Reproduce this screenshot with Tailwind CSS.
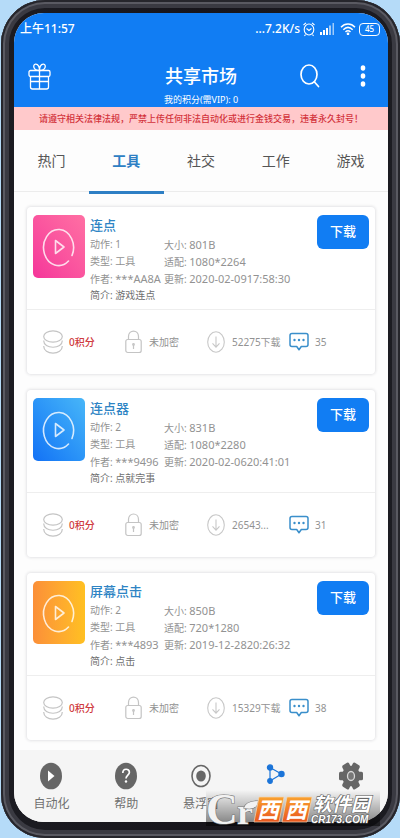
<!DOCTYPE html>
<html lang="zh-CN">
<head>
<meta charset="utf-8">
<meta name="viewport" content="width=device-width, initial-scale=1">
<title>共享市场</title>
<script src="https://cdn.jsdelivr.net/npm/@tailwindcss/browser@4"></script>
</head>
<body class="bg-[#b5dbf8] font-['Noto_Sans','Noto_Sans_CJK_SC',sans-serif] text-[#929292]">
<svg class="hidden" aria-hidden="true">
  <symbol id="play" viewBox="0 0 52 63" preserveAspectRatio="none" fill="none" stroke="#fff" stroke-opacity=".8" stroke-width="1.6" stroke-linecap="round">
    <path d="M35.500 46A15 18 0 1 1 39 40.500"/>
    <path d="M22.500 25.500v13l8.500-6.500z" stroke-linejoin="round"/>
  </symbol>
  <symbol id="coins" viewBox="0 0 20 24" fill="none" stroke="#c4c4c4" stroke-width="1.2">
    <ellipse cx="10" cy="6.500" rx="9.300" ry="5.700"/>
    <path d="M.8 10.500c-.8 9 19.200 9 18.400 0M.8 16c-.8 9.500 19.200 9.500 18.400 0"/>
  </symbol>
  <symbol id="lock" viewBox="0 0 17 24" fill="none" stroke="#c4c4c4" stroke-width="1.2">
    <rect x=".8" y="9.500" width="15.400" height="13" rx="2"/>
    <path d="M3.500 9.500V6.500c0-7.300 10-7.300 10 0v3M8.500 14.500v4.500"/>
    <circle cx="8.500" cy="14.500" r=".8"/>
  </symbol>
  <symbol id="down" viewBox="0 0 18 22" fill="none" stroke="#c8c8c8" stroke-width="1.100">
    <ellipse cx="9" cy="11" rx="8.300" ry="10.200"/>
    <path d="M9 5.500v10.500M5.500 12.300L9 16.200l3.500-3.900"/>
  </symbol>
  <symbol id="chat" viewBox="0 0 20 20">
    <path d="M3 1.500h14q2 0 2 2v9q0 2-2 2h-4.700L10 17.800 7.700 14.500H3q-2 0-2-2v-9q0-2 2-2z" fill="none" stroke="#3a8fcb" stroke-width="1.500" stroke-linejoin="round"/>
    <g fill="#3a8fcb"><circle cx="5.500" cy="8" r="1.200"/><circle cx="10" cy="8" r="1.200"/><circle cx="14.500" cy="8" r="1.200"/></g>
  </symbol>
</svg>

<div class="relative ml-px flex min-h-screen flex-col rounded-[44px] bg-linear-to-r from-[#1c1c22] via-[#17151b] to-[#1c1c22] pt-[13px] pr-3 pb-4 pl-[13px] shadow-[inset_0_0_0_2px_#26262c,inset_0_0_0_4px_#5a5a62,inset_0_0_0_8px_#3a3a42]">
  <div class="flex flex-1 flex-col overflow-hidden rounded-[30px] bg-[#fdfdfd]">

    <header class="bg-[#117df3] text-white">
      <div class="flex h-8 items-center justify-between pr-2 pl-[6px] text-[12px] font-medium">
        <span>上午11:57</span>
        <div class="flex items-center gap-[3px]">
          <span>...7.2K/s</span>
          <svg class="h-4 w-3" viewBox="0 0 12 16" fill="none" stroke="#fff" stroke-width="1.100"><ellipse cx="6" cy="8.500" rx="4.800" ry="5.500"/><path d="M3.500 7.500L6 9.500l2.500-2M.5 4L3 1.800M11.500 4L9 1.800M2.500 13.500L1.500 15M9.500 13.500l1 1.500"/></svg>
          <svg class="ml-px h-3 w-4" viewBox="0 0 16 12" fill="#fff"><path d="M1 9h2v3H1zM4 7h2v5H4zM7 5h2v7H7z"/><path d="M10 2.500h2V12h-2zM13.500 0h1.500v12h-1.500z" opacity=".6"/></svg>
          <svg class="ml-[2px] h-3 w-4" viewBox="0 0 16 12" fill="none" stroke="#fff" stroke-width="1.500"><path d="M1 4.200c4-4.300 10-4.300 14 0M3.300 6.700c3-3 6.400-3 9.400 0M5.500 9c1.600-1.500 3.400-1.500 5 0"/><circle cx="8" cy="10.800" r=".6" fill="#fff"/></svg>
          <span class="flex h-[13px] w-[21px] items-center justify-center rounded-[4px] border border-white text-[8px]">45</span>
        </div>
      </div>
      <div class="mt-[13px] grid h-9 grid-cols-[1fr_auto_1fr] items-center pr-[22px] pl-[14px]">
        <button class="w-6" aria-label="礼物"><svg class="h-[27px] w-[23px]" viewBox="0 0 23 27" fill="none" stroke="#fff" stroke-width="1.300"><rect x="1" y="7.500" width="21" height="6" rx="1.500"/><path d="M2.500 13.500V24q0 2 2 2h14q2 0 2-2V13.500M11.500 7.500V26M2.500 18.500h18"/><path d="M11.500 7.500C5 7.500 4.500 1.500 7.500 1.200c3-.2 4 3.300 4 6.300 0-3 1-6.500 4-6.300 3 .3 2.500 6.300-4 6.300z"/></svg></button>
        <h1 class="pl-2 text-[18px] leading-9 font-medium">共享市场</h1>
        <div class="flex items-center justify-end gap-10">
          <button aria-label="搜索"><svg class="h-6 w-5" viewBox="0 0 20 24" fill="none" stroke="#fff" stroke-width="1.700" stroke-linecap="round"><ellipse cx="9" cy="10.500" rx="8" ry="9.500"/><path d="M14.500 18l4 4.500"/></svg></button>
          <button aria-label="更多"><svg class="h-[22px] w-[6px]" viewBox="0 0 6 22" fill="#fff"><ellipse cx="3" cy="3" rx="2.300" ry="2.700"/><ellipse cx="3" cy="11" rx="2.300" ry="2.700"/><ellipse cx="3" cy="19" rx="2.300" ry="2.700"/></svg></button>
        </div>
      </div>
      <p class="h-[13px] text-center text-[9px] leading-[12px]">我的积分(需VIP): 0</p>
    </header>

    <p class="h-[23px] bg-[#ffc9cb] text-center text-[9px] leading-[23px] font-medium whitespace-nowrap text-[#d3333c]">请遵守相关法律法规，严禁上传任何非法自动化或进行金钱交易，违者永久封号！</p>

    <nav class="grid h-[62px] grid-cols-5 border-b border-[#ececec] text-center text-[14px] text-[#555]">
      <a href="#" class="leading-[61px]">热门</a>
      <a href="#" class="border-b-3 border-[#2e7fc4] leading-[61px] font-bold text-[#2e7fc4]">工具</a>
      <a href="#" class="leading-[61px]">社交</a>
      <a href="#" class="leading-[61px]">工作</a>
      <a href="#" class="leading-[61px]">游戏</a>
    </nav>

    <main class="flex flex-1 flex-col gap-4 px-[13px] pt-[15px] pb-[10px]">
      <article class="rounded-[4px] bg-white shadow-[0_0_3px_1px_#e4e4e6]">
        <div class="flex border-b border-[#eee] px-[6px] pt-2 pb-[5px]">
          <svg class="h-[63px] w-[52px] shrink-0 rounded-[5px] bg-linear-to-bl from-[#ff6fa3] to-[#f5349a]"><use href="#play"/></svg>
          <div class="flex-1 pl-[5px] text-[10px] leading-[17px] whitespace-nowrap">
            <h2 class="h-[21px] text-[13px] leading-[21px] font-medium text-[#2e84c4]">连点</h2>
            <div class="grid auto-rows-[17px] grid-cols-[74px_1fr]">
              <p>动作: 1</p><p>大小: <span class="text-[11px]">801B</span></p>
              <p>类型: 工具</p><p>适配: <span class="text-[11px]">1080*2264</span></p>
              <p>作者: <span class="text-[11px]">***AA8A</span></p><p>更新: <span class="text-[11px]">2020-02-0917:58:30</span></p>
            </div>
            <p class="text-[#6f6f6f]">简介: 游戏连点</p>
          </div>
          <button class="-ml-14 h-[34px] w-[52px] shrink-0 rounded-[6px] bg-[#117df3] text-[13px] font-medium text-white">下载</button>
        </div>
        <div class="grid h-16 grid-cols-4 items-center pr-1 pl-4 text-[10px] whitespace-nowrap">
          <span class="flex items-center gap-[6px] font-medium text-[#cf3a40]"><svg class="h-6 w-5"><use href="#coins"/></svg>0积分</span>
          <span class="flex items-center gap-[7px]"><svg class="h-6 w-[17px]"><use href="#lock"/></svg>未加密</span>
          <span class="flex items-center gap-[7px]"><svg class="h-[22px] w-[18px]"><use href="#down"/></svg>52275下载</span>
          <span class="flex items-center gap-[6px]"><svg class="size-5"><use href="#chat"/></svg>35</span>
        </div>
      </article>

      <article class="rounded-[4px] bg-white shadow-[0_0_3px_1px_#e4e4e6]">
        <div class="flex border-b border-[#eee] px-[6px] pt-2 pb-[5px]">
          <svg class="h-[63px] w-[52px] shrink-0 rounded-[5px] bg-linear-to-tr from-[#1471f5] to-[#48b6f8]"><use href="#play"/></svg>
          <div class="flex-1 pl-[5px] text-[10px] leading-[17px] whitespace-nowrap">
            <h2 class="h-[21px] text-[13px] leading-[21px] font-medium text-[#2e84c4]">连点器</h2>
            <div class="grid auto-rows-[17px] grid-cols-[74px_1fr]">
              <p>动作: 2</p><p>大小: <span class="text-[11px]">831B</span></p>
              <p>类型: 工具</p><p>适配: <span class="text-[11px]">1080*2280</span></p>
              <p>作者: <span class="text-[11px]">***9496</span></p><p>更新: <span class="text-[11px]">2020-02-0620:41:01</span></p>
            </div>
            <p class="text-[#6f6f6f]">简介: 点就完事</p>
          </div>
          <button class="-ml-14 h-[34px] w-[52px] shrink-0 rounded-[6px] bg-[#117df3] text-[13px] font-medium text-white">下载</button>
        </div>
        <div class="grid h-16 grid-cols-4 items-center pr-1 pl-4 text-[10px] whitespace-nowrap">
          <span class="flex items-center gap-[6px] font-medium text-[#cf3a40]"><svg class="h-6 w-5"><use href="#coins"/></svg>0积分</span>
          <span class="flex items-center gap-[7px]"><svg class="h-6 w-[17px]"><use href="#lock"/></svg>未加密</span>
          <span class="flex items-center gap-[7px]"><svg class="h-[22px] w-[18px]"><use href="#down"/></svg>26543...</span>
          <span class="flex items-center gap-[6px]"><svg class="size-5"><use href="#chat"/></svg>31</span>
        </div>
      </article>

      <article class="rounded-[4px] bg-white shadow-[0_0_3px_1px_#e4e4e6]">
        <div class="flex border-b border-[#eee] px-[6px] pt-2 pb-[5px]">
          <svg class="h-[63px] w-[52px] shrink-0 rounded-[5px] bg-linear-to-r from-[#fb8f38] to-[#ffc021]"><use href="#play"/></svg>
          <div class="flex-1 pl-[5px] text-[10px] leading-[17px] whitespace-nowrap">
            <h2 class="h-[21px] text-[13px] leading-[21px] font-medium text-[#2e84c4]">屏幕点击</h2>
            <div class="grid auto-rows-[17px] grid-cols-[74px_1fr]">
              <p>动作: 2</p><p>大小: <span class="text-[11px]">850B</span></p>
              <p>类型: 工具</p><p>适配: <span class="text-[11px]">720*1280</span></p>
              <p>作者: <span class="text-[11px]">***4893</span></p><p>更新: <span class="text-[11px]">2019-12-2820:26:32</span></p>
            </div>
            <p class="text-[#6f6f6f]">简介: 点击</p>
          </div>
          <button class="-ml-14 h-[34px] w-[52px] shrink-0 rounded-[6px] bg-[#117df3] text-[13px] font-medium text-white">下载</button>
        </div>
        <div class="grid h-16 grid-cols-4 items-center pr-1 pl-4 text-[10px] whitespace-nowrap">
          <span class="flex items-center gap-[6px] font-medium text-[#cf3a40]"><svg class="h-6 w-5"><use href="#coins"/></svg>0积分</span>
          <span class="flex items-center gap-[7px]"><svg class="h-6 w-[17px]"><use href="#lock"/></svg>未加密</span>
          <span class="flex items-center gap-[7px]"><svg class="h-[22px] w-[18px]"><use href="#down"/></svg>15329下载</span>
          <span class="flex items-center gap-[6px]"><svg class="size-5"><use href="#chat"/></svg>38</span>
        </div>
      </article>
    </main>

    <nav class="grid h-[72px] grid-cols-5 bg-[#f5f5f5] pt-3 text-center text-[12px] leading-[18px] text-[#707070]">
      <a href="#" class="flex flex-col items-center gap-[5px]"><svg class="h-7 w-6" viewBox="0 0 24 28"><ellipse cx="12" cy="14" rx="11" ry="13.300" fill="#666"/><path d="M9 8.500v11l6.500-5.500z" fill="#fff"/></svg>自动化</a>
      <a href="#" class="flex flex-col items-center gap-[5px]"><svg class="h-7 w-6" viewBox="0 0 24 28" fill="none"><ellipse cx="12" cy="14" rx="11" ry="13.300" fill="#666"/><path d="M8.800 11c0-5 6.600-4.800 6.600-.7 0 2.700-3.400 2.900-3.400 6.200" stroke="#fff" stroke-width="1.700"/><circle cx="12" cy="19.500" r="1.200" fill="#fff"/></svg>帮助</a>
      <a href="#" class="flex flex-col items-center gap-[5px]"><svg class="h-7 w-6" viewBox="0 0 24 28"><ellipse cx="12" cy="14" rx="9" ry="10.500" fill="none" stroke="#666" stroke-width="1.600"/><ellipse cx="12" cy="14" rx="4.800" ry="5.600" fill="#666"/></svg>悬浮窗</a>
      <a href="#" class="flex flex-col items-center" aria-label="共享市场"><svg class="h-6 w-5" viewBox="0 0 20 24" fill="#1b74d8" stroke="#1b74d8" stroke-width="1.200"><path d="M4 5.500v13.500L15.500 12z" fill="none"/><circle cx="4" cy="5.500" r="2.600"/><circle cx="4" cy="19" r="2.300"/><circle cx="15.500" cy="12" r="2.600"/></svg></a>
      <a href="#" class="flex flex-col items-center" aria-label="设置"><svg class="h-7 w-6" viewBox="0 0 24 28"><g transform="translate(12 14) scale(1 1.150)" fill="#666"><circle r="9"/><rect x="-12" y="-3.800" width="24" height="7.600" rx="1.500"/><rect x="-12" y="-3.800" width="24" height="7.600" rx="1.500" transform="rotate(60)"/><rect x="-12" y="-3.800" width="24" height="7.600" rx="1.500" transform="rotate(120)"/></g><ellipse cx="12" cy="14" rx="3.500" ry="4.500" fill="#777" stroke="#d8d8d8" stroke-width="1.300"/></svg></a>
    </nav>
  </div>

  <!-- Site badge floating over the lower right corner -->
  <div class="absolute right-5 bottom-3 flex h-9 w-[174px] items-center bg-linear-to-b from-black/0 to-black/50 whitespace-nowrap">
    <svg class="h-9 w-[172px] overflow-visible" viewBox="0 0 172 36" aria-label="Cr 西西软件园 CR173.COM">
      <defs><linearGradient id="or" x1="0" y1="0" x2="0" y2="1"><stop stop-color="#f9a12f"/><stop offset="1" stop-color="#e9571f"/></linearGradient></defs>
      <g fill="#f2f2f2" stroke="#7a7a7a" stroke-width="1.200" paint-order="stroke" font-family="Liberation Serif, serif" font-weight="bold">
        <text x="0" y="34" font-size="44">C</text>
        <text x="31" y="34" font-size="36">r</text>
        <path d="M38 18q2-7 14-7-1 10-14 7z"/>
      </g>
      <path d="M53 7h25l-5 25H48zM81 7h25l-5 25H76z" fill="url(#or)" stroke="#f4d9b8" stroke-width=".7"/>
      <g fill="#fff" font-family="Noto Sans CJK SC, sans-serif" font-weight="bold" font-style="italic">
        <text x="51" y="28" font-size="22">西</text>
        <text x="79" y="28" font-size="22">西</text>
        <text x="107" y="21" font-size="19" stroke="#666" stroke-width="1.200" paint-order="stroke">软件园</text>
        <text x="105" y="33" font-size="10" font-family="Liberation Sans, sans-serif" stroke="#555" stroke-width="1.200" paint-order="stroke">CR173.COM</text>
      </g>
    </svg>
  </div>
</div>
</body>
</html>
